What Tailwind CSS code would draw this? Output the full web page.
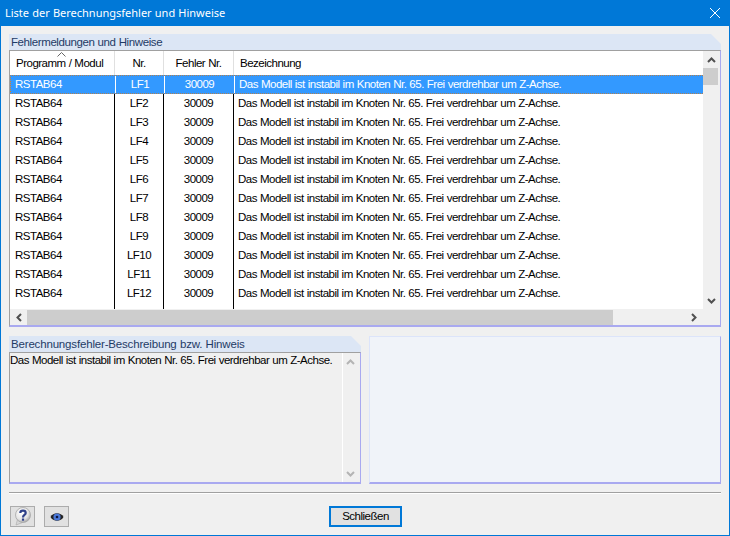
<!doctype html>
<html lang="de">
<head>
<meta charset="utf-8">
<title>Liste der Berechnungsfehler und Hinweise</title>
<script src="https://cdn.jsdelivr.net/npm/@tailwindcss/browser@4"></script>
</head>
<body class="m-0 overflow-hidden">
<div class="w-[730px] h-[536px] flex flex-col bg-[#f0f0f0] border border-[#0078d7] border-t-0 font-['Liberation_Sans',sans-serif] text-[11.5px] tracking-[-0.5px] [word-spacing:0.3px] text-black">
	<!-- title bar -->
	<div class="h-[26px] -mx-px bg-[#0078d7] flex items-center justify-between pl-[5px] pr-[9px] text-white font-['Noto_Sans',sans-serif] text-[11px] tracking-normal">
		<span>Liste der Berechnungsfehler und Hinweise</span>
		<svg width="12" height="12" viewBox="0 0 12 12" stroke="white" fill="none"><path d="M1 1 L11 11 M11 1 L1 11"/></svg>
	</div>

	<div class="flex-1 flex flex-col pl-[8px] pr-[8px] pt-[8px]">
		<!-- upper panel -->
		<div class="w-[712px] h-[293px] flex flex-col">
			<div class="h-[16px] bg-[#dce6f5] [clip-path:polygon(0_0,calc(100%-10px)_0,100%_10px,100%_100%,0_100%)] text-[#1f3b66] leading-[16px] pl-[2px] tracking-[-0.4px]">Fehlermeldungen und Hinweise</div>
			<div class="flex-1 flex flex-col border-t border-t-[#a0a0a0] border-l border-l-[#a0a0a0] border-r border-r-[#a9a9f0] border-b-2 border-b-[#a9a9f0] bg-white">
				<div class="flex-1 flex min-h-0">
					<div class="flex-1 flex flex-col min-w-0">
						<div class="h-[24px] grid grid-cols-[105px_49px_70px_1fr] items-center shrink-0">
							<span class="pl-[6px] border-r border-[#e0e0e0] h-full leading-[24px] relative whitespace-nowrap">Programm / Modul
								<svg class="absolute left-[47px] top-[1px]" width="9" height="5" viewBox="0 0 9 5" fill="none" stroke="#666"><path d="M0.5 4.5 L4.5 0.5 L8.5 4.5"/></svg>
							</span>
							<span class="text-center border-r border-[#e0e0e0] h-full leading-[24px]">Nr.</span>
							<span class="text-center border-r border-[#e0e0e0] h-full leading-[24px]">Fehler Nr.</span>
							<span class="pl-[6px] leading-[24px] h-full">Bezeichnung</span>
						</div>
						<div class="flex-1 flex flex-col">
							<div class="h-[19px] grid grid-cols-[105px_49px_70px_1fr] bg-[#3399ff] text-white border-y border-dotted border-y-[#b08050] border-l border-l-[#e08020]">
								<span class="pl-[4px] border-r border-white leading-[17px]">RSTAB64</span><span class="text-center border-r border-white leading-[17px]">LF1</span><span class="text-center border-r border-white leading-[17px]">30009</span><span class="pl-[4px] leading-[17px] whitespace-nowrap">Das Modell ist instabil im Knoten Nr. 65. Frei verdrehbar um Z-Achse.</span>
							</div>
							<div class="h-[19px] grid grid-cols-[105px_49px_70px_1fr] leading-[19px]">
								<span class="pl-[5px] border-r border-black">RSTAB64</span><span class="text-center border-r border-black">LF2</span><span class="text-center border-r border-black">30009</span><span class="pl-[4px] whitespace-nowrap">Das Modell ist instabil im Knoten Nr. 65. Frei verdrehbar um Z-Achse.</span>
							</div>
							<div class="h-[19px] grid grid-cols-[105px_49px_70px_1fr] leading-[19px]">
								<span class="pl-[5px] border-r border-black">RSTAB64</span><span class="text-center border-r border-black">LF3</span><span class="text-center border-r border-black">30009</span><span class="pl-[4px] whitespace-nowrap">Das Modell ist instabil im Knoten Nr. 65. Frei verdrehbar um Z-Achse.</span>
							</div>
							<div class="h-[19px] grid grid-cols-[105px_49px_70px_1fr] leading-[19px]">
								<span class="pl-[5px] border-r border-black">RSTAB64</span><span class="text-center border-r border-black">LF4</span><span class="text-center border-r border-black">30009</span><span class="pl-[4px] whitespace-nowrap">Das Modell ist instabil im Knoten Nr. 65. Frei verdrehbar um Z-Achse.</span>
							</div>
							<div class="h-[19px] grid grid-cols-[105px_49px_70px_1fr] leading-[19px]">
								<span class="pl-[5px] border-r border-black">RSTAB64</span><span class="text-center border-r border-black">LF5</span><span class="text-center border-r border-black">30009</span><span class="pl-[4px] whitespace-nowrap">Das Modell ist instabil im Knoten Nr. 65. Frei verdrehbar um Z-Achse.</span>
							</div>
							<div class="h-[19px] grid grid-cols-[105px_49px_70px_1fr] leading-[19px]">
								<span class="pl-[5px] border-r border-black">RSTAB64</span><span class="text-center border-r border-black">LF6</span><span class="text-center border-r border-black">30009</span><span class="pl-[4px] whitespace-nowrap">Das Modell ist instabil im Knoten Nr. 65. Frei verdrehbar um Z-Achse.</span>
							</div>
							<div class="h-[19px] grid grid-cols-[105px_49px_70px_1fr] leading-[19px]">
								<span class="pl-[5px] border-r border-black">RSTAB64</span><span class="text-center border-r border-black">LF7</span><span class="text-center border-r border-black">30009</span><span class="pl-[4px] whitespace-nowrap">Das Modell ist instabil im Knoten Nr. 65. Frei verdrehbar um Z-Achse.</span>
							</div>
							<div class="h-[19px] grid grid-cols-[105px_49px_70px_1fr] leading-[19px]">
								<span class="pl-[5px] border-r border-black">RSTAB64</span><span class="text-center border-r border-black">LF8</span><span class="text-center border-r border-black">30009</span><span class="pl-[4px] whitespace-nowrap">Das Modell ist instabil im Knoten Nr. 65. Frei verdrehbar um Z-Achse.</span>
							</div>
							<div class="h-[19px] grid grid-cols-[105px_49px_70px_1fr] leading-[19px]">
								<span class="pl-[5px] border-r border-black">RSTAB64</span><span class="text-center border-r border-black">LF9</span><span class="text-center border-r border-black">30009</span><span class="pl-[4px] whitespace-nowrap">Das Modell ist instabil im Knoten Nr. 65. Frei verdrehbar um Z-Achse.</span>
							</div>
							<div class="h-[19px] grid grid-cols-[105px_49px_70px_1fr] leading-[19px]">
								<span class="pl-[5px] border-r border-black">RSTAB64</span><span class="text-center border-r border-black">LF10</span><span class="text-center border-r border-black">30009</span><span class="pl-[4px] whitespace-nowrap">Das Modell ist instabil im Knoten Nr. 65. Frei verdrehbar um Z-Achse.</span>
							</div>
							<div class="h-[19px] grid grid-cols-[105px_49px_70px_1fr] leading-[19px]">
								<span class="pl-[5px] border-r border-black">RSTAB64</span><span class="text-center border-r border-black">LF11</span><span class="text-center border-r border-black">30009</span><span class="pl-[4px] whitespace-nowrap">Das Modell ist instabil im Knoten Nr. 65. Frei verdrehbar um Z-Achse.</span>
							</div>
							<div class="h-[19px] grid grid-cols-[105px_49px_70px_1fr] leading-[19px]">
								<span class="pl-[5px] border-r border-black">RSTAB64</span><span class="text-center border-r border-black">LF12</span><span class="text-center border-r border-black">30009</span><span class="pl-[4px] whitespace-nowrap">Das Modell ist instabil im Knoten Nr. 65. Frei verdrehbar um Z-Achse.</span>
							</div>
							<div class="flex-1 grid grid-cols-[105px_49px_70px_1fr]">
								<span class="border-r border-black"></span><span class="border-r border-black"></span><span class="border-r border-black"></span><span></span>
							</div>
						</div>
					</div>
					<!-- vertical scrollbar -->
					<div class="w-[17px] bg-[#f0f0f0] flex flex-col items-center">
						<div class="h-[17px] flex items-center justify-center">
							<svg width="9" height="6" viewBox="0 0 9 6" fill="none" stroke="#505050" stroke-width="2"><path d="M1 5 L4.5 1.5 L8 5"/></svg>
						</div>
						<div class="w-[15px] h-[17px] bg-[#cdcdcd] -ml-[2px]"></div>
						<div class="flex-1"></div>
						<div class="h-[17px] flex items-center justify-center">
							<svg width="9" height="6" viewBox="0 0 9 6" fill="none" stroke="#505050" stroke-width="2"><path d="M1 1 L4.5 4.5 L8 1"/></svg>
						</div>
					</div>
				</div>
				<!-- horizontal scrollbar -->
				<div class="h-[16px] bg-[#f0f0f0] flex items-center">
					<div class="w-[17px] flex justify-center">
						<svg width="6" height="9" viewBox="0 0 6 9" fill="none" stroke="#505050" stroke-width="2"><path d="M5 1 L1.5 4.5 L5 8"/></svg>
					</div>
					<div class="w-[586px] h-[15px] bg-[#cdcdcd]"></div>
					<div class="flex-1 flex justify-end pr-[23px]">
						<svg width="6" height="9" viewBox="0 0 6 9" fill="none" stroke="#505050" stroke-width="2"><path d="M1 1 L4.5 4.5 L1 8"/></svg>
					</div>
				</div>
			</div>
		</div>

		<!-- lower panels -->
		<div class="mt-[9px] h-[148px] flex gap-[8px]">
			<div class="w-[352px] flex flex-col">
				<div class="h-[16px] bg-[#dce6f5] [clip-path:polygon(0_0,calc(100%-10px)_0,100%_10px,100%_100%,0_100%)] text-[#1f3b66] leading-[16px] pl-[2px] tracking-[-0.17px] whitespace-nowrap">Berechnungsfehler-Beschreibung bzw. Hinweis</div>
				<div class="flex-1 flex border-t border-t-[#a0a0a0] border-l border-l-[#a0a0a0] border-r border-r-[#a9a9f0] border-b-2 border-b-[#a9a9f0]">
					<div class="flex-1 leading-[15px] whitespace-nowrap">Das Modell ist instabil im Knoten Nr. 65. Frei verdrehbar um Z-Achse.</div>
					<div class="w-[18px] pr-[2px] border-l border-white flex flex-col items-center justify-between">
						<div class="h-[17px] flex items-center justify-center">
							<svg width="9" height="6" viewBox="0 0 9 6" fill="none" stroke="#b4b4b4" stroke-width="2"><path d="M1 5 L4.5 1.5 L8 5"/></svg>
						</div>
						<div class="h-[17px] flex items-center justify-center">
							<svg width="9" height="6" viewBox="0 0 9 6" fill="none" stroke="#b4b4b4" stroke-width="2"><path d="M1 1 L4.5 4.5 L8 1"/></svg>
						</div>
					</div>
				</div>
			</div>
			<div class="flex-1 bg-[#f0f3f9] border-t border-l border-[#dce4fa] border-r border-r-[#a9a9f0] border-b-2 border-b-[#a9a9f0]"></div>
		</div>

		<!-- separator -->
		<div class="mt-[8px] w-[712px] h-[2px] border-t border-t-[#a0a0a0] border-b border-b-white"></div>

		<!-- footer -->
		<div class="mt-[12px] flex items-start relative">
			<div class="w-[25px] h-[21px] ml-[1px] border border-[#acacac] bg-[#e1e1e1] flex items-center justify-center">
				<svg width="19" height="19" viewBox="0 0 19 19">
					<defs>
						<radialGradient id="bubble" cx="0.4" cy="0.35" r="0.7">
							<stop offset="0" stop-color="#ffffff"/>
							<stop offset="0.65" stop-color="#e4e4e4"/>
							<stop offset="1" stop-color="#9c9c9c"/>
						</radialGradient>
					</defs>
					<path d="M4.5 12.5 L3 18 L9.5 15.5 Z" fill="#d8d8d8" stroke="#a8a8a8" stroke-width="0.6"/>
					<circle cx="10" cy="8" r="7.5" fill="url(#bubble)" stroke="#a8a8a8" stroke-width="0.8"/>
					<path d="M7.3 6 C7.3 2.9 12.7 2.9 12.7 6 C12.7 8.2 10 7.8 10 10.5" fill="none" stroke="#2f4189" stroke-width="2.2"/>
					<rect x="8.9" y="11.5" width="2.2" height="2.2" fill="#2f4189"/>
				</svg>
			</div>
			<div class="w-[25px] h-[21px] ml-[9px] border border-[#acacac] bg-[#e1e1e1] flex items-center justify-center">
				<svg width="14" height="10" viewBox="0 0 14 10">
					<path d="M0.5 5 C3 0 11 0 13.5 5 C11 10 3 10 0.5 5 Z" fill="#222"/>
					<circle cx="7" cy="5" r="3.6" fill="#4a78d8"/>
					<circle cx="7" cy="5" r="1.3" fill="#0a1440"/>
				</svg>
			</div>
			<div class="absolute left-[320px] top-0 w-[73px] h-[21px] border-2 border-[#0078d7] bg-[#e1e1e1] flex items-center justify-center">Schließen</div>
		</div>
	</div>
</div>
</body>
</html>
